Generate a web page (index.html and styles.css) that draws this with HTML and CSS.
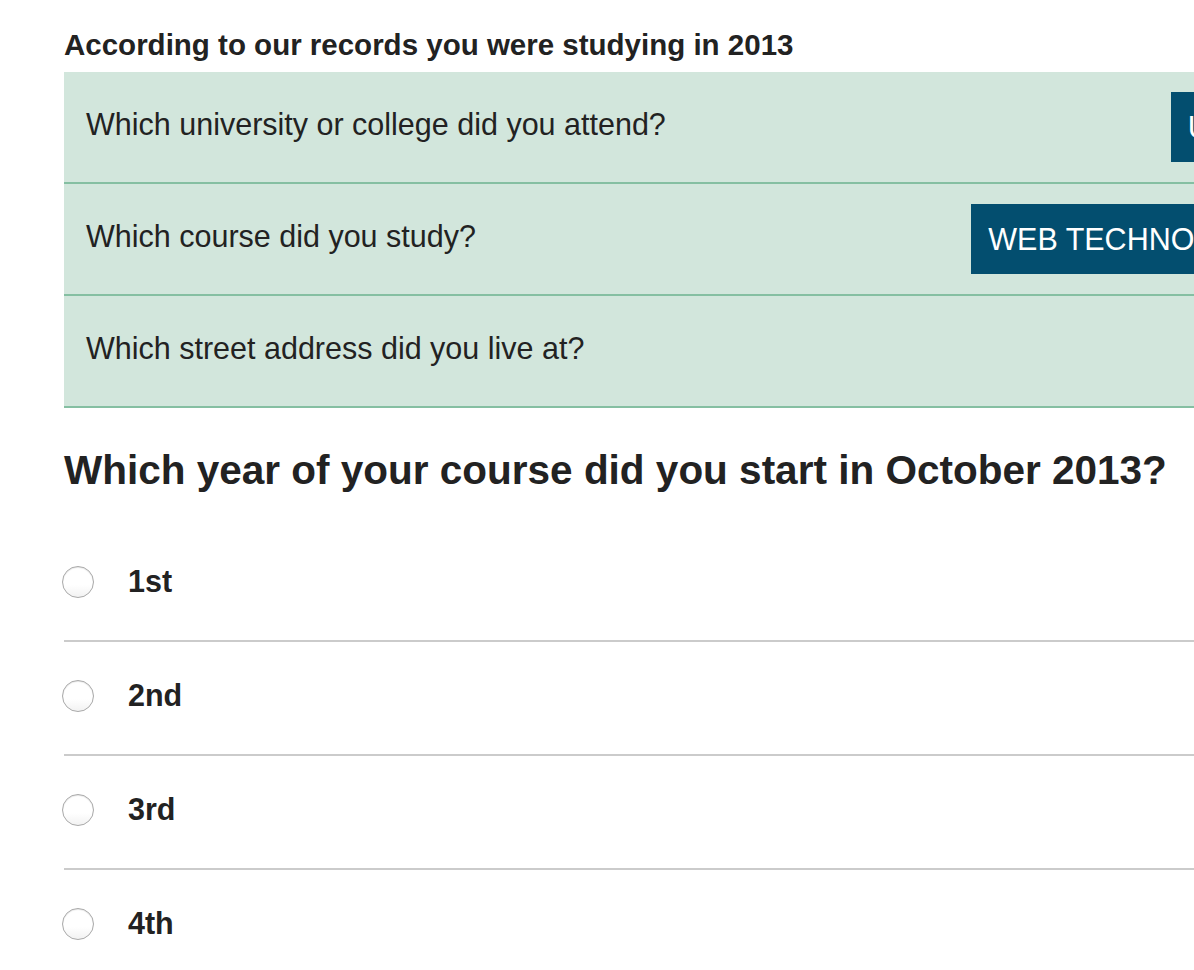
FILE: index.html
```html
<!DOCTYPE html>
<html lang="en">
<head>
<meta charset="utf-8">
<title>Study details</title>
<link rel="stylesheet" href="styles.css">
</head>
<body>
<main class="page">
  <h1 class="records-title">According to our records you were studying in 2013</h1>
  <div class="records">
    <div class="record-row">
      <span class="record-q">Which university or college did you attend?</span>
      <span class="record-btn">ULSTER</span>
    </div>
    <div class="record-row">
      <span class="record-q">Which course did you study?</span>
      <span class="record-btn">WEB TECHNOLOGIES</span>
    </div>
    <div class="record-row">
      <span class="record-q">Which street address did you live at?</span>
    </div>
  </div>
  <h2 class="question">Which year of your course did you start in October 2013?</h2>
  <div class="options">
    <label class="option"><span class="radio"></span><span class="option-label">1st</span></label>
    <label class="option"><span class="radio"></span><span class="option-label">2nd</span></label>
    <label class="option"><span class="radio"></span><span class="option-label">3rd</span></label>
    <label class="option"><span class="radio"></span><span class="option-label">4th</span></label>
  </div>
</main>
</body>
</html>
```
FILE: styles.css
```css
html, body {
  margin: 0;
  padding: 0;
  overflow: hidden;
  background: #fff;
}
body {
  font-family: "Liberation Sans", Arial, sans-serif;
  color: #222;
}
.page {
  width: 1325px;
  padding-left: 64px;
  box-sizing: border-box;
}
.records-title {
  margin: 25px 0 7px;
  font-size: 29.5px;
  line-height: 40px;
  font-weight: 700;
  white-space: nowrap;
}
.records {
  background: #d2e6dc;
}
.record-row {
  height: 110px;
  border-bottom: 2px solid #85bfa2;
  display: flex;
  align-items: center;
  padding-left: 22px;
}
.record-q {
  font-size: 30.5px;
  flex: 1;
  white-space: nowrap;
  margin-top: -6px;
}
.record-btn {
  background: #034e6f;
  color: #fff;
  font-size: 30.5px;
  height: 70px;
  display: flex;
  align-items: center;
  padding: 0 17px;
  box-sizing: border-box;
  white-space: nowrap;
  flex-shrink: 0;
}
.question {
  margin: 38px 0 0;
  font-size: 40.5px;
  line-height: 48px;
  font-weight: 700;
  white-space: nowrap;
}
.options {
  margin-top: 34px;
}
.option {
  display: flex;
  align-items: center;
  height: 112px;
  border-bottom: 2px solid #cbcbcb;
}
.radio {
  width: 32px;
  height: 32px;
  border-radius: 50%;
  border: 1px solid #a9a9a9;
  box-sizing: border-box;
  background: linear-gradient(#fff 60%, #f2f2f2);
  box-shadow: inset 0 1px 1px rgba(0,0,0,0.1);
  margin-left: -2px;
  margin-right: 34px;
  margin-top: -4px;
}
.option-label {
  font-size: 30.5px;
  font-weight: 700;
  margin-top: -6px;
}
```
